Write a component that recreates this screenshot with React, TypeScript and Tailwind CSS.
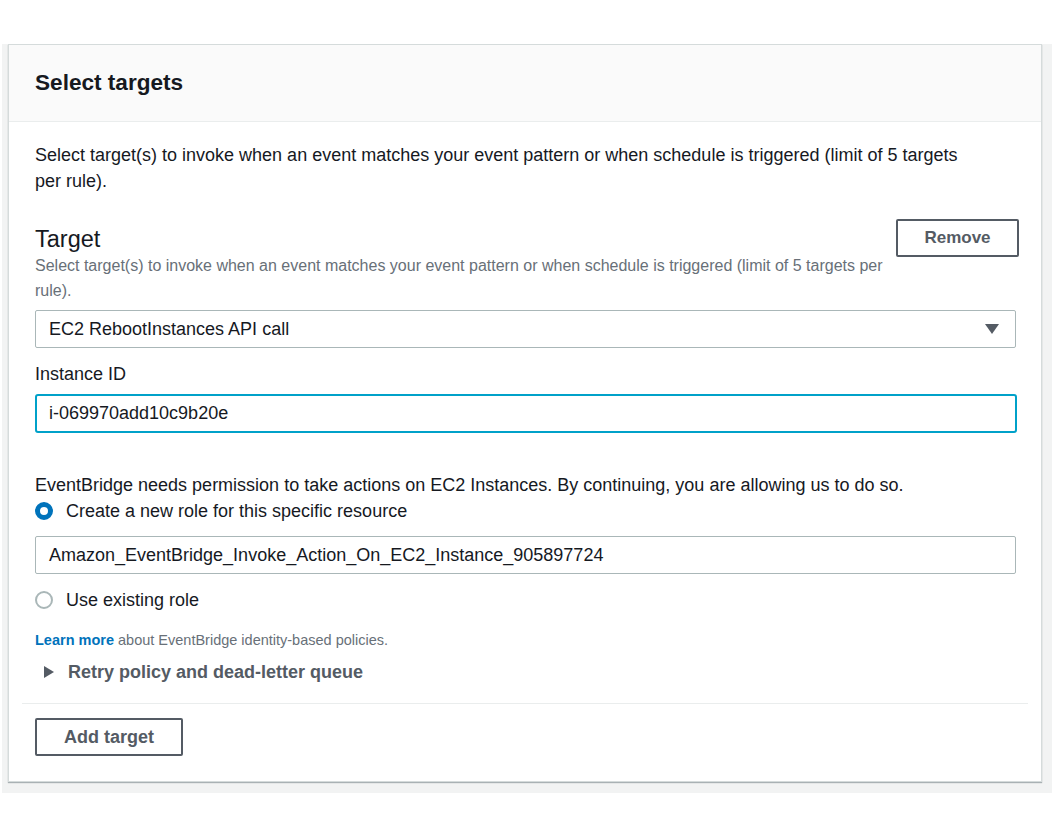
import { useState } from 'react';

const font = { fontFamily: '"Liberation Sans", Arial, sans-serif' };

export default function App() {
  const [role, setRole] = useState<'new' | 'existing'>('new');

  return (
    <div className="h-[837px] w-[1052px] bg-white pt-[44px]" style={font}>
      <div className="ml-[2px] h-[749px] bg-[#f2f3f3] pl-[6px] pr-[10px]">
        <div className="h-[738px] border border-[#d5dbdb] bg-white shadow-[0_1px_1px_0_rgba(0,28,36,0.3)]">
          {/* header */}
          <div className="flex h-[77px] items-center border-b border-[#eaeded] bg-[#fafafa] px-[26px]">
            <h2 className="text-[22.6px] font-bold text-[#16191f]">Select targets</h2>
          </div>

          <div className="px-[26px] pt-[20px] text-[18px] text-[#16191f]">
            <p className="w-[950px] leading-[26px]">
              Select target(s) to invoke when an event matches your event pattern or when schedule is
              triggered (limit of 5 targets per rule).
            </p>

            <div className="mt-[27px] flex items-start justify-between">
              <div className="w-[860px]">
                <div className="pt-[4px] text-[23.5px] leading-[28px]">Target</div>
                <p className="text-[16px] leading-[25px] text-[#687078]">
                  Select target(s) to invoke when an event matches your event pattern or when schedule is
                  triggered (limit of 5 targets per rule).
                </p>
              </div>
              <button className="mr-[-4px] mt-[-2px] h-[38px] w-[123px] rounded-[2px] border-2 border-[#545b64] bg-white text-[17px] font-bold text-[#545b64]">
                Remove
              </button>
            </div>

            <div className="mt-[7px] flex h-[38px] w-[981px] items-center justify-between rounded-[2px] border border-[#aab7b8] px-[13px]">
              <span>EC2 RebootInstances API call</span>
              <svg width="16" height="12" viewBox="0 0 16 12" className="mr-[2px]">
                <path d="M1 1h14L8 11z" fill="#545b64" />
              </svg>
            </div>

            <div className="mt-[13px] leading-[26px]">Instance ID</div>
            <div className="mt-[7px] flex h-[39px] w-[982px] items-center rounded-[3px] border-2 border-[#00a1c9] px-[12px]">
              i-069970add10c9b20e
            </div>

            <p className="mt-[39px] leading-[26px]">
              EventBridge needs permission to take actions on EC2 Instances. By continuing, you are allowing us to do so.
            </p>

            <label className="flex cursor-pointer items-center gap-[13px] leading-[26px]" onClick={() => setRole('new')}>
              <span
                className={
                  role === 'new'
                    ? 'h-[18px] w-[18px] rounded-full border-[5px] border-[#0073bb] bg-white'
                    : 'h-[18px] w-[18px] rounded-full border-2 border-[#aab7b8] bg-white'
                }
              />
              <span>Create a new role for this specific resource</span>
            </label>

            <div className="mt-[12px] flex h-[38px] w-[981px] items-center rounded-[2px] border border-[#aab7b8] px-[13px]">
              Amazon_EventBridge_Invoke_Action_On_EC2_Instance_905897724
            </div>

            <label className="mt-[13px] flex cursor-pointer items-center gap-[13px] leading-[26px]" onClick={() => setRole('existing')}>
              <span
                className={
                  role === 'existing'
                    ? 'h-[18px] w-[18px] rounded-full border-[5px] border-[#0073bb] bg-white'
                    : 'h-[18px] w-[18px] rounded-full border-2 border-[#aab7b8] bg-white'
                }
              />
              <span>Use existing role</span>
            </label>

            <p className="mt-[15px] text-[14.5px] leading-[24px] text-[#687078]">
              <a className="font-bold text-[#0073bb]">Learn more</a> about EventBridge identity-based policies.
            </p>

            <div className="mt-[7px] flex items-center gap-[14px] pl-[9px] leading-[26px]">
              <svg width="10" height="12" viewBox="0 0 10 12">
                <path d="M0 0l10 6-10 6z" fill="#545b64" />
              </svg>
              <span className="font-bold text-[#545b64]">Retry policy and dead-letter queue</span>
            </div>
          </div>

          <div className="mx-[13px] mt-[18px] border-t border-[#eaeded]" />

          <div className="px-[26px] pt-[14px]">
            <button className="h-[38px] w-[148px] rounded-[2px] border-2 border-[#545b64] bg-white text-[18px] font-bold text-[#545b64]">
              Add target
            </button>
          </div>
        </div>
      </div>
    </div>
  );
}
